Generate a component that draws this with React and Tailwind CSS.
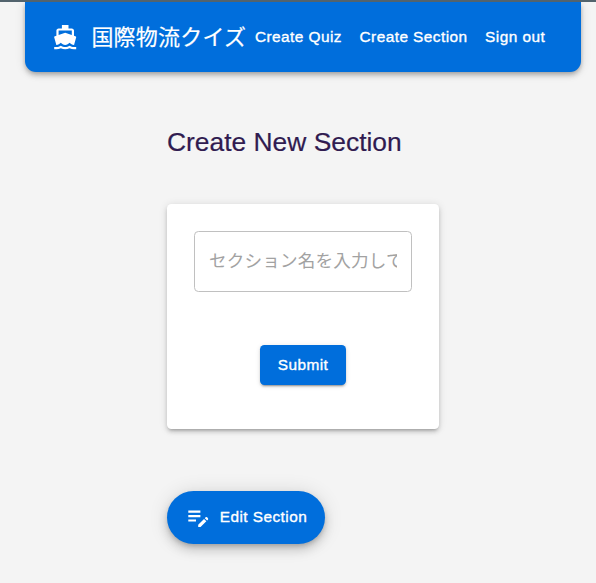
import { MdDirectionsBoat, MdEditNote } from 'react-icons/md';

const links = ['Create Quiz', 'Create Section', 'Sign out'];

export default function App() {
  return (
    <div className="h-[583px] w-[596px] overflow-hidden border-t-2 border-[#52636d] bg-[#f4f4f4] font-['Liberation_Sans','Noto_Sans_CJK_JP',sans-serif]">
      <header className="ml-[25px] flex h-[70px] w-[556px] items-center rounded-b-[11px] bg-[#006edc] pl-[27px] text-white shadow-[0_2px_4px_-1px_rgba(0,0,0,0.2),0_4px_5px_rgba(0,0,0,0.14),0_1px_11px_rgba(0,0,0,0.12)]">
        <MdDirectionsBoat className="size-[26.4px] shrink-0" />
        <span className="ml-[13px] w-[155px] shrink-0 text-[22px] leading-[35px] tracking-[0.2px] whitespace-nowrap [-webkit-text-stroke:0.2px_white]">国際物流クイズ</span>
        <nav className="ml-[8.6px] flex gap-[17.6px] pb-[2px] text-[15.4px] leading-[27px] tracking-[0.44px] whitespace-nowrap [-webkit-text-stroke:0.35px_white]">
          {links.map((label) => (
            <a key={label}>{label}</a>
          ))}
        </nav>
      </header>
      <main className="ml-[167px] w-[272px] pt-[53px]">
        <h1 className="text-[26.4px] leading-[35px] whitespace-nowrap text-[#301b50] [-webkit-text-stroke:0.2px_#301b50]">Create New Section</h1>
        <form className="mt-[44px] flex h-[225px] flex-col items-center rounded-[4.4px] bg-white pt-[27px] shadow-[0_3px_3px_-2px_rgba(0,0,0,0.2),0_3px_4px_rgba(0,0,0,0.14),0_1px_8px_rgba(0,0,0,0.12)]">
          <input
            className="h-[61px] w-[218px] rounded-[4.4px] border border-[#c0c0c0] px-[14px] text-[17.6px] tracking-[0.165px] outline-none placeholder:text-[#a2a2a2]"
            placeholder="セクション名を入力してください"
          />
          <button type="button" className="mt-[53px] h-[40px] w-[86px] rounded-[4.4px] bg-[#006edc] text-[15.4px] tracking-[0.44px] text-white shadow-[0_3px_1px_-2px_rgba(0,0,0,0.2),0_2px_2px_rgba(0,0,0,0.14),0_1px_5px_rgba(0,0,0,0.12)] [-webkit-text-stroke:0.35px_white]">Submit</button>
        </form>
        <button type="button" className="mt-[62px] flex h-[53px] w-[158px] items-center rounded-full bg-[#006edc] pl-[17.6px] text-[15.4px] tracking-[0.44px] whitespace-nowrap text-white shadow-[0_3px_5px_-1px_rgba(0,0,0,0.2),0_6px_11px_rgba(0,0,0,0.14),0_1px_20px_rgba(0,0,0,0.12)] [-webkit-text-stroke:0.35px_white]">
          <MdEditNote className="mr-[8.8px] size-[26.4px] shrink-0" />
          <span className="pb-[2px]">Edit Section</span>
        </button>
      </main>
    </div>
  );
}
